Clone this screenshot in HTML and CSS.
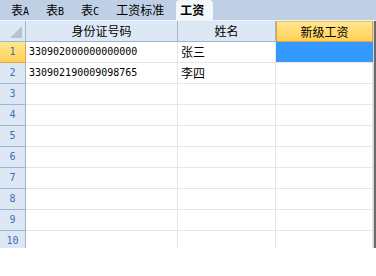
FILE: index.html
```html
<!DOCTYPE html>
<html>
<head>
<meta charset="utf-8">
<link rel="stylesheet" href="styles.css">
</head>
<body>
<div class="tabs">
  <span class="tab">表<span class="lat">A</span></span>
  <span class="tab">表<span class="lat">B</span></span>
  <span class="tab">表<span class="lat">C</span></span>
  <span class="tab">工资标准</span>
  <span class="tab active">工资</span>
</div>
<div class="sheet">
  <div class="corner"><span class="tri"></span></div>
  <div class="colhdr">身份证号码</div>
  <div class="colhdr">姓名</div>
  <div class="colhdr sel">新级工资</div>
  <div class="vbar"></div>

  <div class="rowhdr sel">1</div>
  <div class="cell num">330902000000000000</div>
  <div class="cell">张三</div>
  <div class="cell active"></div>

  <div class="rowhdr">2</div>
  <div class="cell num">330902190009098765</div>
  <div class="cell">李四</div>
  <div class="cell"></div>

  <div class="rowhdr">3</div><div class="cell"></div><div class="cell"></div><div class="cell"></div>
  <div class="rowhdr">4</div><div class="cell"></div><div class="cell"></div><div class="cell"></div>
  <div class="rowhdr">5</div><div class="cell"></div><div class="cell"></div><div class="cell"></div>
  <div class="rowhdr">6</div><div class="cell"></div><div class="cell"></div><div class="cell"></div>
  <div class="rowhdr">7</div><div class="cell"></div><div class="cell"></div><div class="cell"></div>
  <div class="rowhdr">8</div><div class="cell"></div><div class="cell"></div><div class="cell"></div>
  <div class="rowhdr">9</div><div class="cell"></div><div class="cell"></div><div class="cell"></div>
  <div class="rowhdr last">10</div><div class="cell last"></div><div class="cell last"></div><div class="cell last"></div>
</div>
</body>
</html>
```
FILE: styles.css
```css
* { box-sizing: border-box; }
html, body { margin: 0; padding: 0; background: #ffffff; }
body {
  width: 376px;
  height: 276px;
  overflow: hidden;
  font-family: "Noto Sans CJK SC", sans-serif;
  font-size: 12px;
  color: #000;
}
.lat {
  font-family: "DejaVu Sans Mono", monospace;
  font-size: 10px;
}
.tabs {
  height: 21px;
  background: #bfd0e5;
  border-bottom: 1px solid #eef3fa;
  display: flex;
  align-items: stretch;
  padding-left: 11px;
  gap: 17px;
}
.tab {
  line-height: 20px;
  white-space: nowrap;
}
.tab.active {
  margin-left: -5px;
  padding: 0 9px 0 4px;
  background: #f3f6fb;
  border-radius: 4px 4px 0 0;
  font-weight: bold;
}
.sheet {
  display: grid;
  grid-template-columns: 26px 152px 98px 97px 3px;
  grid-template-rows: 21px repeat(9, 21px) 17px;
}
.corner {
  background: #dde8f5;
  border-right: 1px solid #9fb5cf;
  border-bottom: 1px solid #9fb5cf;
  position: relative;
}
.tri {
  position: absolute;
  right: 3px;
  bottom: 3px;
  width: 0;
  height: 0;
  border-left: 12px solid transparent;
  border-bottom: 12px solid #b7c3d1;
}
.colhdr {
  background: #dde8f5;
  border-right: 1px solid #9fb5cf;
  border-bottom: 1px solid #9fb5cf;
  text-align: center;
  line-height: 20px;
}
.colhdr.sel {
  background: linear-gradient(#ffe68f, #ffd157);
  border: 1px solid #e1a43f;
  border-top-color: #f0c465;
  line-height: 19px;
}
.vbar {
  grid-row: 1 / span 11;
  grid-column: 5;
  background: linear-gradient(90deg, #d5d5d5 0, #d5d5d5 1px, #6b6b6b 1px, #6b6b6b 3px);
}
.rowhdr {
  background: #dde8f5;
  border-right: 1px solid #9fb5cf;
  border-bottom: 1px solid #9fb5cf;
  color: #3c6fb4;
  text-align: center;
  font-family: "DejaVu Sans Mono", monospace;
  font-size: 10px;
  line-height: 20px;
}
.rowhdr.sel {
  background: linear-gradient(#ffe68f, #ffd157);
  border-bottom-color: #e1a43f;
  border-right-color: #e1a43f;
}
.rowhdr.last, .cell.last { border-bottom: none; }
.cell {
  border-right: 1px solid #e6e6e6;
  border-bottom: 1px solid #e6e6e6;
  padding-left: 3px;
  line-height: 20px;
  white-space: nowrap;
}
.cell.num {
  font-family: "DejaVu Sans Mono", monospace;
  font-size: 10px;
}
.cell.active {
  background: #3399ff;
  border-right: none;
}
```
